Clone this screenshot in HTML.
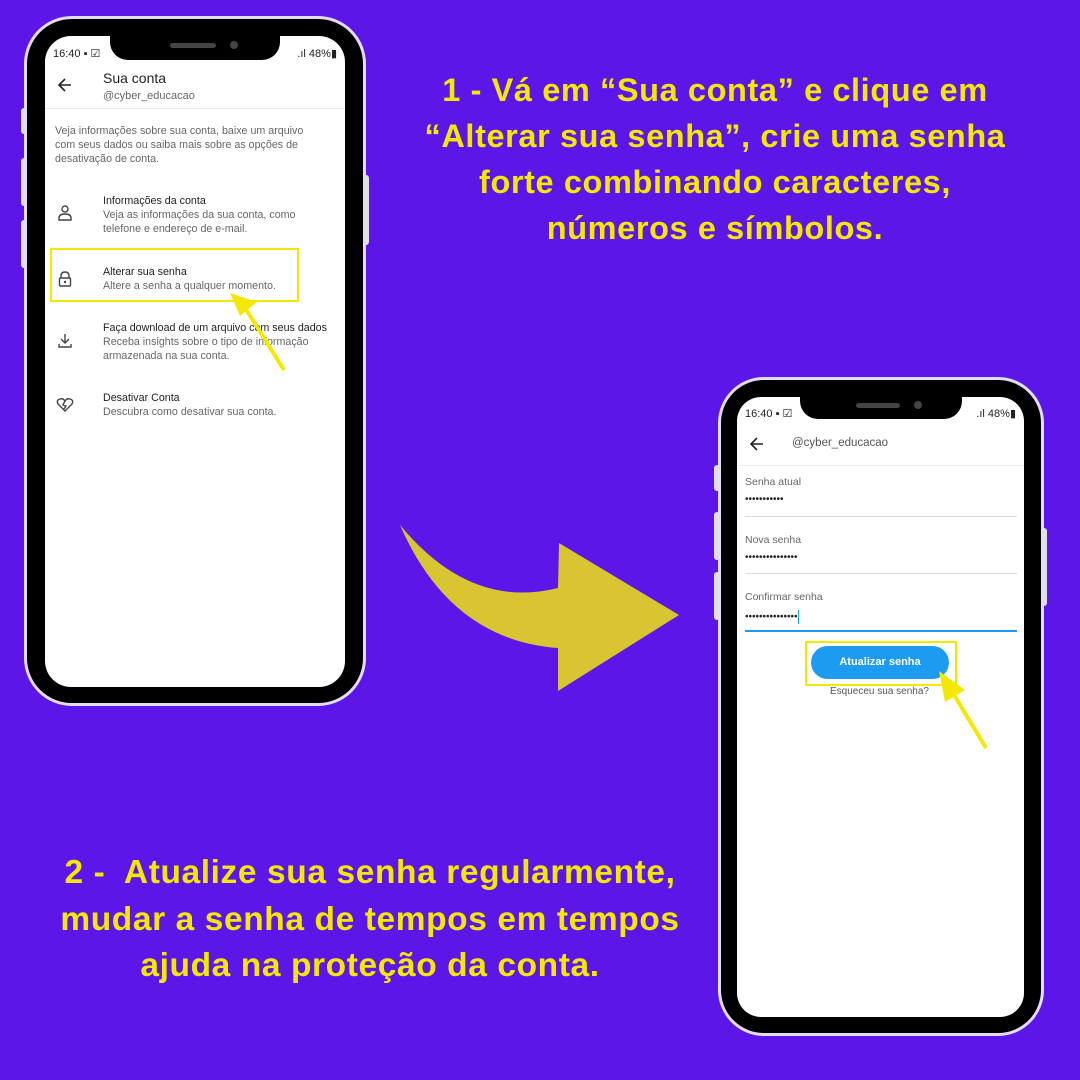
<!DOCTYPE html>
<html><head><meta charset="utf-8"><style>
*{margin:0;padding:0;box-sizing:border-box}
body{width:1080px;height:1080px;background:#5c16e8;position:relative;overflow:hidden;font-family:"Liberation Sans",sans-serif}
.t{position:absolute;color:#f5e800;font-weight:bold;text-align:center;font-size:32.5px;line-height:46px;letter-spacing:0.6px;white-space:nowrap}
.ph{position:absolute;background:#000;border:3px solid #e4dcf5;}
.scr{position:absolute;background:#fff;overflow:hidden}
.notch{position:absolute;background:#000;border-radius:0 0 18px 18px}
.a{position:absolute;white-space:nowrap;color:#222;font-size:11px}
.g{color:#666}
.btn{position:absolute;background:#e0e0e0}
</style></head><body>
<div class="t" style="left:380px;top:67px;width:670px">1 - Vá em “Sua conta” e clique em<br>“Alterar sua senha”, crie uma senha<br>forte combinando caracteres,<br>números e símbolos.</div>
<div class="t" style="left:10px;top:850px;width:720px;font-size:33.5px;line-height:46.5px">2 -&nbsp; Atualize sua senha regularmente,<br>mudar a senha de tempos em tempos<br>ajuda na proteção da conta.</div>

<svg style="position:absolute;left:0;top:0" width="1080" height="1080">
<path d="M400,525 Q470,610 558,588 L559,543 L679,615 L558,691 L558,648 Q450,640 400,525 Z" fill="#d9c531"/>
</svg>

<!-- phone 1 -->
<div class="btn" style="left:21px;top:108px;width:6px;height:26px;border-radius:3px"></div>
<div class="btn" style="left:21px;top:158px;width:6px;height:48px;border-radius:3px"></div>
<div class="btn" style="left:21px;top:220px;width:6px;height:48px;border-radius:3px"></div>
<div class="btn" style="left:363px;top:175px;width:6px;height:70px;border-radius:3px"></div>
<div class="ph" style="left:24px;top:16px;width:342px;height:690px;border-radius:48px"></div>
<div class="scr" style="left:45px;top:36px;width:300px;height:651px;border-radius:26px">
 <div class="a" style="left:8px;top:11px;font-size:11px">16:40 ▪ ☑</div>
 <div class="a" style="right:8px;top:11px;font-size:11px">.ıl 48%▮</div>
 <svg style="position:absolute;left:12px;top:41px" width="16" height="16"><path d="M14,8H2M8,2L2,8L8,14" stroke="#222" stroke-width="1.6" fill="none"/></svg>
 <div class="a" style="left:58px;top:34px;font-size:14px;font-weight:500">Sua conta</div>
 <div class="a g" style="left:58px;top:54px;font-size:11px">@cyber_educacao</div>
 <div style="position:absolute;left:0;top:72px;width:300px;height:1px;background:#eee"></div>
 <div class="a g" style="left:10px;top:88px;line-height:14px;font-size:10.7px">Veja informações sobre sua conta, baixe um arquivo<br>com seus dados ou saiba mais sobre as opções de<br>desativação de conta.</div>
 <svg style="position:absolute;left:12px;top:168px" width="16" height="18"><circle cx="8" cy="5" r="3" stroke="#444" stroke-width="1.4" fill="none"/><path d="M2,16V14Q2,10 8,10Q14,10 14,14V16Z" stroke="#444" stroke-width="1.4" fill="none"/></svg>
 <div class="a" style="left:58px;top:158px;font-size:10.7px;line-height:14px">Informações da conta<br><span class="g">Veja as informações da sua conta, como<br>telefone e endereço de e-mail.</span></div>
 <svg style="position:absolute;left:12px;top:234px" width="16" height="18"><path d="M4,8V6Q4,2 8,2Q12,2 12,6V8" stroke="#444" stroke-width="1.4" fill="none"/><rect x="2.5" y="8" width="11" height="8" rx="1" stroke="#444" stroke-width="1.4" fill="none"/><circle cx="8" cy="12" r="1.2" fill="#444"/></svg>
 <div class="a" style="left:58px;top:229px;font-size:10.7px;line-height:14px">Alterar sua senha<br><span class="g">Altere a senha a qualquer momento.</span></div>
 <svg style="position:absolute;left:12px;top:296px" width="16" height="18"><path d="M8,2V11M4,7L8,11L12,7M2,12V15H14V12" stroke="#444" stroke-width="1.4" fill="none"/></svg>
 <div class="a" style="left:58px;top:285px;font-size:10.7px;line-height:14px">Faça download de um arquivo com seus dados<br><span class="g">Receba insights sobre o tipo de informação<br>armazenada na sua conta.</span></div>
 <svg style="position:absolute;left:11px;top:361px" width="18" height="16"><path d="M9,14L2,7Q0,3 4,2Q7,1 9,4Q11,1 14,2Q18,3 16,7Z M9,4L7,8L10,9L8,12" stroke="#444" stroke-width="1.4" fill="none"/></svg>
 <div class="a" style="left:58px;top:355px;font-size:10.7px;line-height:14px">Desativar Conta<br><span class="g">Descubra como desativar sua conta.</span></div>
</div>
<div class="notch" style="left:110px;top:36px;width:170px;height:24px"></div>
<div style="position:absolute;left:170px;top:43px;width:46px;height:5px;border-radius:3px;background:#444"></div>
<div style="position:absolute;left:230px;top:41px;width:8px;height:8px;border-radius:50%;background:#444"></div>
<div style="position:absolute;left:50px;top:248px;width:249px;height:54px;border:2.5px solid #f5e800"></div>
<svg style="position:absolute;left:0;top:0" width="1080" height="1080"><path d="M284,370L242,303" stroke="#f5e800" stroke-width="4"/><path d="M230,293L257,302L240,316Z" fill="#f5e800"/></svg>

<!-- phone 2 -->
<div class="btn" style="left:714px;top:465px;width:6px;height:26px;border-radius:3px"></div>
<div class="btn" style="left:714px;top:512px;width:6px;height:48px;border-radius:3px"></div>
<div class="btn" style="left:714px;top:572px;width:6px;height:48px;border-radius:3px"></div>
<div class="btn" style="left:1041px;top:528px;width:6px;height:78px;border-radius:3px"></div>
<div class="ph" style="left:718px;top:377px;width:326px;height:659px;border-radius:46px"></div>
<div class="scr" style="left:737px;top:397px;width:287px;height:620px;border-radius:24px">
 <div class="a" style="left:8px;top:10px">16:40 ▪ ☑</div>
 <div class="a" style="right:8px;top:10px">.ıl 48%▮</div>
 <svg style="position:absolute;left:12px;top:39px" width="16" height="16"><path d="M14,8H2M8,2L2,8L8,14" stroke="#222" stroke-width="1.6" fill="none"/></svg>
 <div class="a g" style="left:55px;top:40px;font-size:11.5px;color:#555">@cyber_educacao</div>
 <div style="position:absolute;left:0;top:68px;width:287px;height:1px;background:#eee"></div>
 <div class="a g" style="left:8px;top:79px;font-size:10.5px">Senha atual</div>
 <div class="a" style="left:8px;top:97px;font-size:10px">•••••••••••</div>
 <div style="position:absolute;left:8px;top:119px;width:272px;height:1px;background:#ddd"></div>
 <div class="a g" style="left:8px;top:137px;font-size:10.5px">Nova senha</div>
 <div class="a" style="left:8px;top:155px;font-size:10px">•••••••••••••••</div>
 <div style="position:absolute;left:8px;top:176px;width:272px;height:1px;background:#ddd"></div>
 <div class="a g" style="left:8px;top:194px;font-size:10.5px">Confirmar senha</div>
 <div class="a" style="left:8px;top:213px;font-size:10px">•••••••••••••••<span style="display:inline-block;width:1.5px;height:14px;background:#1d9bf0;vertical-align:middle"></span></div>
 <div style="position:absolute;left:8px;top:233px;width:272px;height:2px;background:#1d9bf0"></div>
 <div style="position:absolute;left:74px;top:249px;width:138px;height:33px;border-radius:17px;background:#1d9bf0;color:#fff;font-size:11px;font-weight:bold;text-align:center;line-height:33px">Atualizar senha</div>
 <div class="a g" style="left:93px;top:289px;font-size:10px;color:#555">Esqueceu sua senha?</div>
</div>
<div class="notch" style="left:800px;top:397px;width:162px;height:22px"></div>
<div style="position:absolute;left:856px;top:403px;width:44px;height:5px;border-radius:3px;background:#444"></div>
<div style="position:absolute;left:914px;top:401px;width:8px;height:8px;border-radius:50%;background:#444"></div>
<div style="position:absolute;left:805px;top:641px;width:152px;height:45px;border:2.5px solid #f5e800"></div>
<svg style="position:absolute;left:0;top:0" width="1080" height="1080"><path d="M986,748L950,688" stroke="#f5e800" stroke-width="4"/><path d="M939,671L965,690L945,702Z" fill="#f5e800"/></svg>
</body></html>
